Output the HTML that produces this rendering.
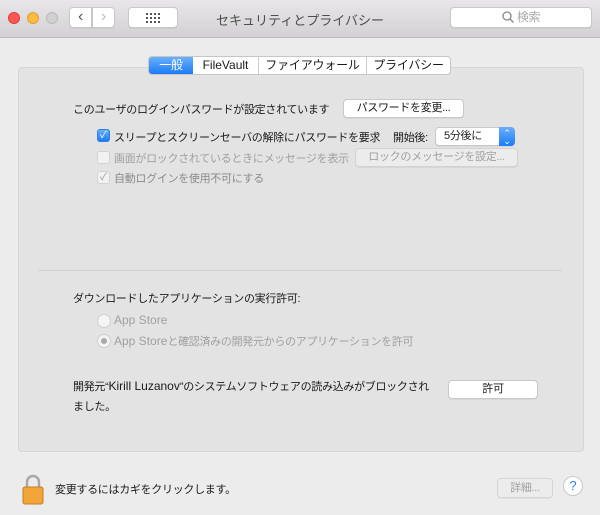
<!DOCTYPE html>
<html><head><meta charset="utf-8"><style>
*{margin:0;padding:0;box-sizing:border-box}
body{width:600px;height:515px;background:#ececec;font-family:"Liberation Sans","Noto Sans CJK JP",sans-serif;font-size:11px;letter-spacing:-0.3px;color:#1a1a1a;position:relative;overflow:hidden}
.a{position:absolute;white-space:nowrap}
.l{letter-spacing:0;font-size:12px}
.title{left:0;top:0;width:600px;height:38px;background:linear-gradient(#e8e6e8,#d3d1d3);border-bottom:1px solid #b9b9b9}
.btn{position:absolute;background:#fff;border:1px solid #c8c8c8;border-radius:4px;box-shadow:0 1px 0 rgba(0,0,0,.05);text-align:center;white-space:nowrap}
.dot{position:absolute;width:12px;height:12px;border-radius:50%;top:12px}
.panel{left:18px;top:67px;width:566px;height:385px;background:#e3e3e3;border:1px solid #d6d6d6;border-radius:4px}
.cb{position:absolute;width:13px;height:13px;border-radius:3px;border:1px solid #c4c4c4;background:#fff;letter-spacing:0}
.gray{color:#a0a0a0}
.radio{position:absolute;width:14px;height:14px;border-radius:50%;border:1px solid #cfcfcf;background:#f4f4f4}
</style></head><body>
<div class="a title"></div>
<div class="dot" style="left:8px;background:#fc5753;border:1px solid #de3f3a"></div>
<div class="dot" style="left:27px;background:#fdbc40;border:1px solid #dea033"></div>
<div class="dot" style="left:46px;background:#d0d0d0;border:1px solid #b9b9b9"></div>
<div class="btn" style="left:69px;top:7px;width:23px;height:21px;border-radius:4px 0 0 4px;font-size:16px;line-height:18px;color:#555">‹</div>
<div class="btn" style="left:92px;top:7px;width:23px;height:21px;border-radius:0 4px 4px 0;font-size:16px;line-height:18px;color:#bbb">›</div>
<div class="btn" style="left:128px;top:7px;width:50px;height:21px">
<svg width="14" height="10" style="margin-top:5px" fill="#555"><g><rect x="0" y="0" width="2" height="2"/><rect x="4" y="0" width="2" height="2"/><rect x="8" y="0" width="2" height="2"/><rect x="12" y="0" width="2" height="2"/><rect x="0" y="4" width="2" height="2"/><rect x="4" y="4" width="2" height="2"/><rect x="8" y="4" width="2" height="2"/><rect x="12" y="4" width="2" height="2"/><rect x="0" y="8" width="2" height="2"/><rect x="4" y="8" width="2" height="2"/><rect x="8" y="8" width="2" height="2"/><rect x="12" y="8" width="2" height="2"/></g></svg></div>
<div class="a" style="left:0;width:600px;top:10px;text-align:center;font-size:13px;letter-spacing:0;color:#4d4d4d">セキュリティとプライバシー</div>
<div class="btn" style="left:450px;top:7px;width:142px;height:21px;color:#aaa;line-height:19px;font-size:12px">
<svg width="12" height="12" style="vertical-align:-2px"><circle cx="5" cy="5" r="4" stroke="#888" stroke-width="1.3" fill="none"/><line x1="8" y1="8" x2="11.5" y2="11.5" stroke="#888" stroke-width="1.4"/></svg> 検索</div>

<div class="a panel"></div>
<div class="a" style="left:148px;top:56px;width:303px;height:19px;background:#fff;border:1px solid #c6c6c6;border-radius:4px;display:flex;font-size:12px;letter-spacing:-0.2px;line-height:17px;overflow:hidden">
<div style="width:44px;background:linear-gradient(#6aaefc,#1c7cf5);color:#fff;text-align:center">一般</div>
<div style="width:66px;text-align:center;border-right:1px solid #ccc;letter-spacing:0">FileVault</div>
<div style="width:108px;text-align:center;border-right:1px solid #ccc">ファイアウォール</div>
<div style="flex:1;text-align:center">プライバシー</div></div>

<div class="a" style="left:73px;top:101px">このユーザのログインパスワードが設定されています</div>
<div class="btn" style="left:343px;top:99px;width:121px;height:19px;line-height:17px">パスワードを変更...</div>

<div class="cb" style="left:97px;top:129px;background:linear-gradient(#6aaefc,#1c7cf5);border-color:#2a7ee8;color:#fff;font-size:10px;line-height:11px;text-align:center">✓</div>
<div class="a" style="left:114px;top:129px">スリープとスクリーンセーバの解除にパスワードを要求</div>
<div class="a" style="left:393px;top:129px">開始後:</div>
<div class="btn" style="left:435px;top:127px;width:80px;height:19px;text-align:left;padding-left:8px;line-height:17px">5分後に</div>
<div class="a" style="left:499px;top:127px;width:16px;height:19px;background:linear-gradient(#6aaefc,#1c7cf5);border-radius:0 4px 4px 0;color:#fff;font-size:9px;line-height:8px;text-align:center;padding-top:2px">⌃<br>⌄</div>

<div class="cb" style="left:97px;top:151px;background:#f2f2f2;border-color:#d2d2d2"></div>
<div class="a gray" style="left:114px;top:150px">画面がロックされているときにメッセージを表示</div>
<div class="btn gray" style="left:355px;top:148px;width:163px;height:19px;line-height:17px;background:#ececec;border-color:#d2d2d2">ロックのメッセージを設定...</div>

<div class="cb" style="left:97px;top:171px;background:#f2f2f2;border-color:#d2d2d2;color:#999;font-size:10px;line-height:11px;text-align:center">✓</div>
<div class="a" style="left:114px;top:170px;color:#8a8a8a">自動ログインを使用不可にする</div>

<div class="a" style="left:38px;top:270px;width:524px;height:1px;background:#d0d0d0"></div>

<div class="a" style="left:73px;top:290px">ダウンロードしたアプリケーションの実行許可:</div>
<div class="radio" style="left:97px;top:314px"></div>
<div class="a gray" style="left:114px;top:313px"><span class="l">App Store</span></div>
<div class="radio" style="left:97px;top:334px"><div style="width:6px;height:6px;border-radius:50%;background:#aaa;margin:3px"></div></div>
<div class="a gray" style="left:114px;top:333px"><span class="l">App Store</span>と確認済みの開発元からのアプリケーションを許可</div>

<div class="a" style="left:73px;top:378px">開発元“<span class="l">Kirill Luzanov</span>”のシステムソフトウェアの読み込みがブロックされ</div>
<div class="a" style="left:73px;top:398px">ました。</div>
<div class="btn" style="left:448px;top:380px;width:90px;height:19px;line-height:17px">許可</div>

<svg class="a" style="left:21px;top:473px" width="24" height="32"><path d="M6 14V9a6 6 0 0 1 12 0v5" stroke="#a8a8a8" stroke-width="2.4" fill="none"/><rect x="2" y="14" width="20" height="17" rx="2" fill="#f0a43a" stroke="#c67d1c"/></svg>
<div class="a" style="left:55px;top:481px">変更するにはカギをクリックします。</div>
<div class="btn gray" style="left:497px;top:478px;width:56px;height:20px;line-height:18px;background:#ececec;border-color:#d6d6d6">詳細...</div>
<div class="a" style="left:563px;top:476px;width:20px;height:20px;border-radius:50%;background:#fff;border:1px solid #c8c8c8;color:#2a7ee8;text-align:center;line-height:18px;font-size:13px;letter-spacing:0">?</div>
</body></html>
